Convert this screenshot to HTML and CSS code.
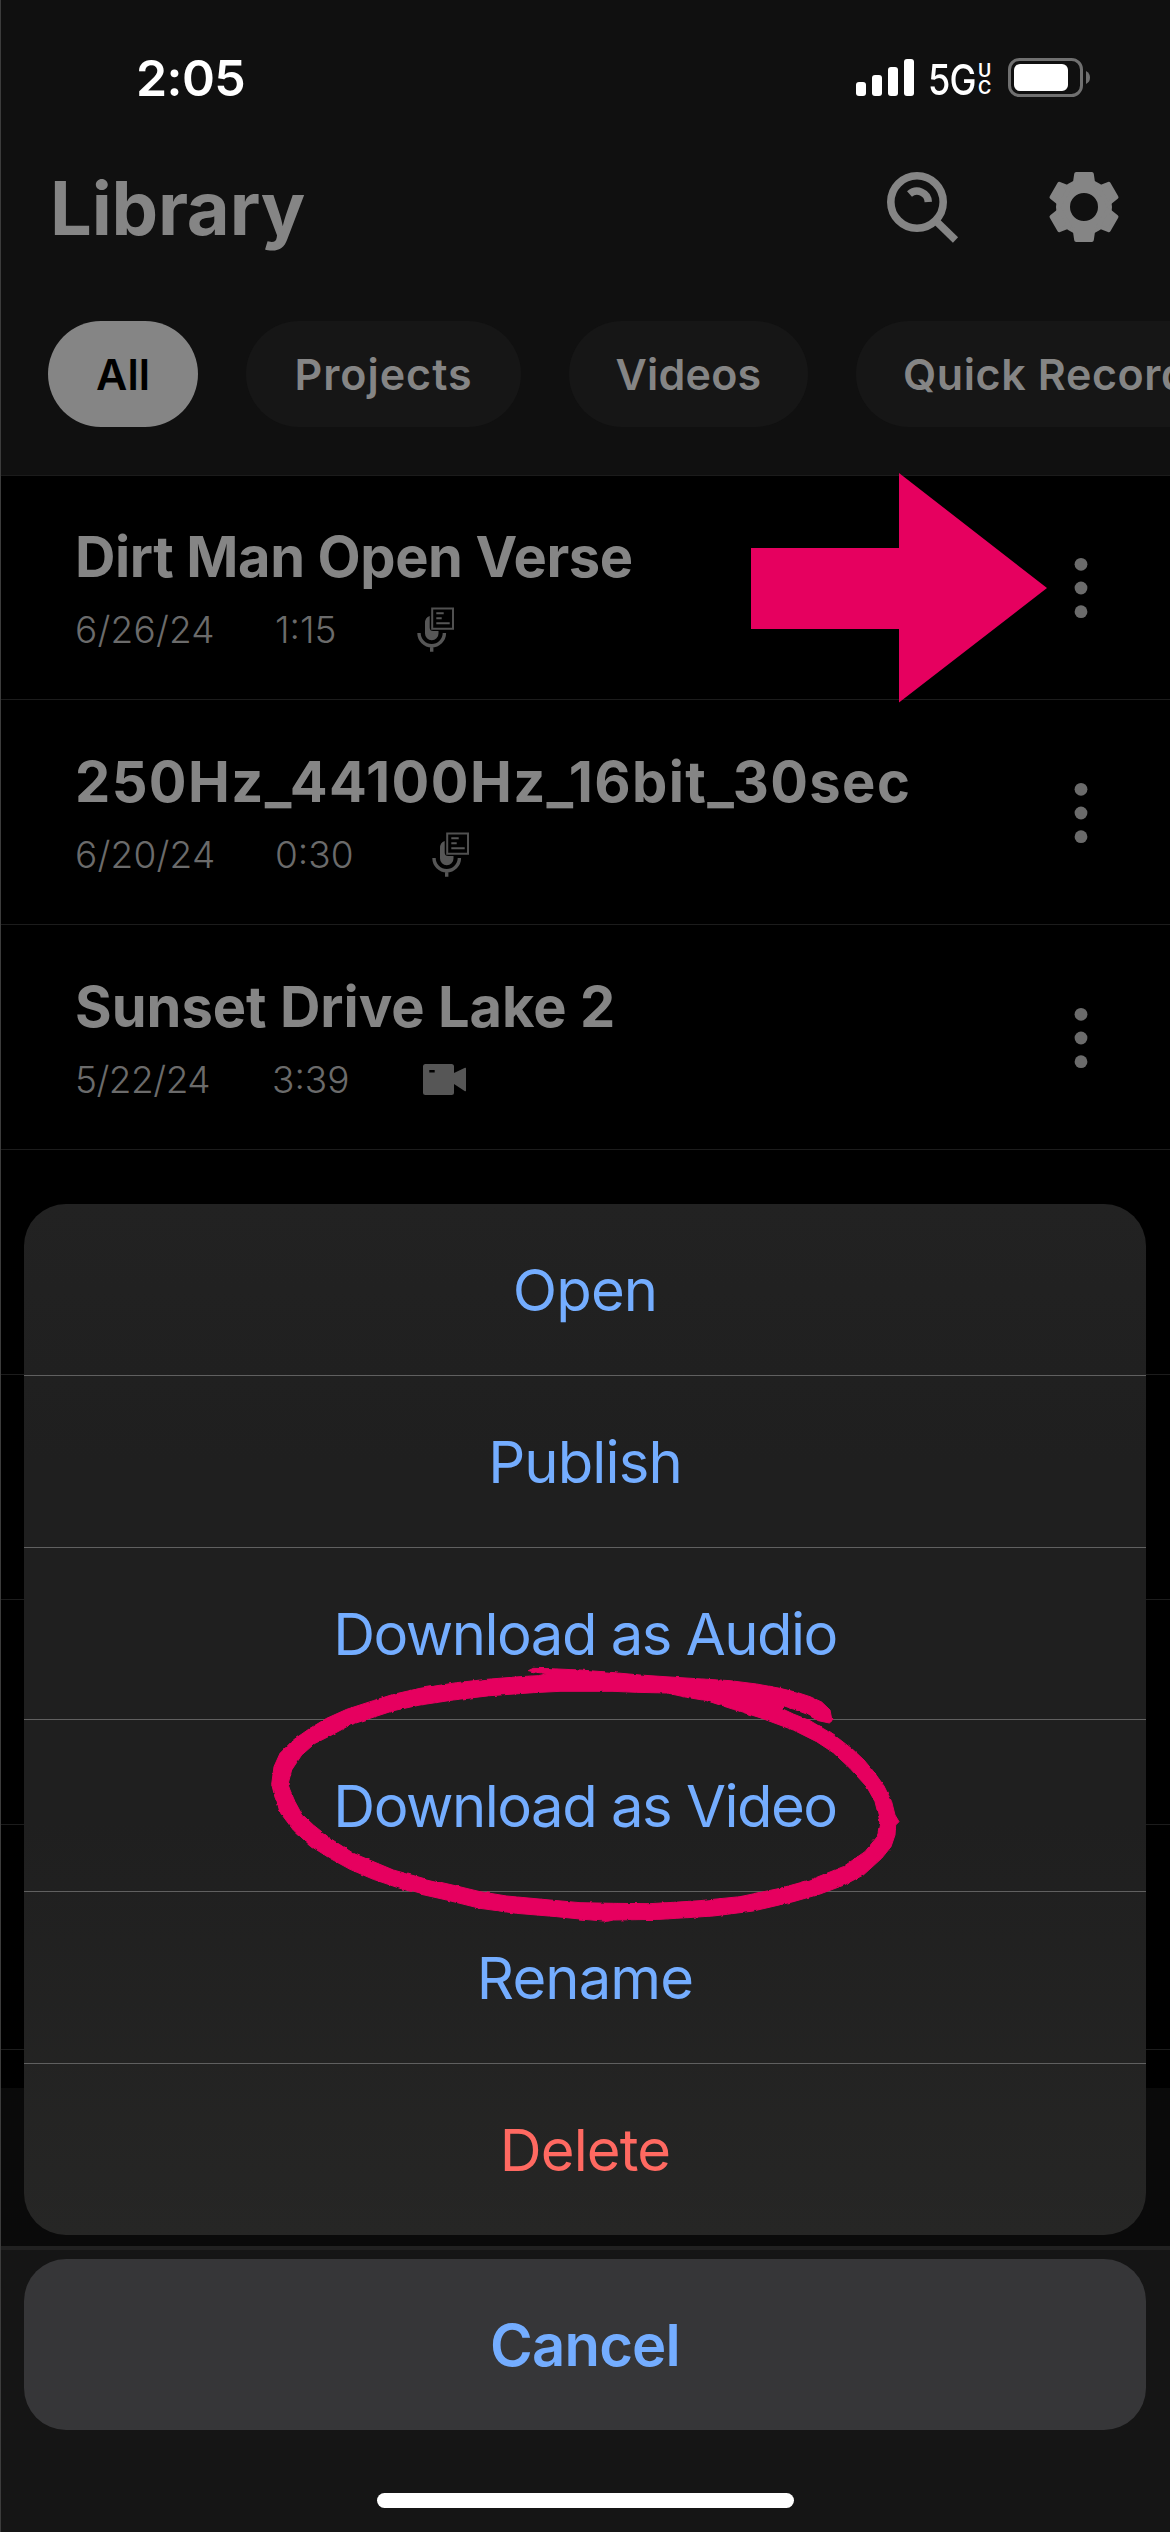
FILE: index.html
```html
<!DOCTYPE html>
<html lang="en">
<head>
<meta charset="utf-8">
<title>Library</title>
<link rel="stylesheet" href="styles.css">
</head>
<body>
<svg width="0" height="0" class="defs" aria-hidden="true">
  <symbol id="mic" viewBox="0 0 38 45">
    <path d="M8 26.5V16Q8 10.5 12.7 9V20.5Q12.7 24 16.2 24H21.5V26.5A6.75 6.75 0 0 1 8 26.5Z" fill="#565656"/>
    <path d="M2 26A12.7 12.7 0 0 0 27.4 26M14.7 38V44.7" fill="none" stroke="#565656" stroke-width="3.4"/>
    <path d="M15.2 1.5H36V21.7H15.2Z" fill="none" stroke="#505050" stroke-width="2"/>
    <path d="M19.3 6.3H26.7M19.3 11.3H24.7M19.3 16.3H32.7" stroke="#565656" stroke-width="2"/>
  </symbol>
  <symbol id="dots" viewBox="0 0 14 62">
    <g fill="#6b6b6b"><circle cx="7" cy="7.3" r="6.4"/><circle cx="7" cy="31" r="6.4"/><circle cx="7" cy="54.7" r="6.4"/></g>
  </symbol>
</svg>
<div class="screen">
  <header class="header">
    <div class="status">
      <span class="clock">2:05</span>
      <div class="indicators">
        <svg class="signal" width="58" height="38" viewBox="0 0 58 38" fill="#fff"><rect y="23" width="10" height="14" rx="3"/><rect x="16" y="16" width="10" height="21" rx="3"/><rect x="32" y="8" width="10" height="29" rx="3"/><rect x="48" width="10" height="37" rx="3"/></svg>
        <span class="network">5G</span>
        <span class="band"><span>U</span><span>C</span></span>
        <svg class="battery" width="83" height="40" viewBox="0 0 83 40"><rect x="1.5" y="1.5" width="72" height="36" rx="10" fill="none" stroke="#707070" stroke-width="3"/><rect x="6" y="6" width="54" height="27" rx="6" fill="#fff"/><path d="M78 13Q82 15 82 19.500Q82 24 78 26Z" fill="#707070"/></svg>
      </div>
    </div>
    <div class="titlebar">
      <h1>Library</h1>
      <div class="actions">
        <svg width="72" height="72" viewBox="0 0 72 72" fill="none" stroke="#858585"><circle cx="30" cy="31" r="26.200" stroke-width="7.600"/><path d="M22.500 23A11.300 11.300 0 0 1 41.300 31" stroke-width="7.400"/><path d="M50 51L68.500 69" stroke-width="7.400"/></svg>
        <svg width="72" height="72" viewBox="-36 -36 72 72"><circle r="21" fill="none" stroke="#858585" stroke-width="14"/><g id="teeth" fill="#858585" stroke="#858585" stroke-width="4" stroke-linejoin="round"><path id="tooth" d="M-7.800-33H7.800L9.400-22H-9.400Z"/><use href="#tooth" transform="rotate(60)"/><use href="#tooth" transform="rotate(120)"/><use href="#tooth" transform="rotate(180)"/><use href="#tooth" transform="rotate(240)"/><use href="#tooth" transform="rotate(300)"/></g></svg>
      </div>
    </div>
    <nav class="pills">
      <span class="pill all">All</span>
      <span class="pill projects">Projects</span>
      <span class="pill videos">Videos</span>
      <span class="pill quick">Quick Recordings</span>
    </nav>
  </header>
  <main class="list">
    <div class="row">
      <div class="info"><h2 class="t1">Dirt Man Open Verse</h2>
        <div class="meta"><span class="date">6/26/24</span><span class="time">1:15</span><svg class="mic m1"><use href="#mic"/></svg></div></div>
      <svg class="dots"><use href="#dots"/></svg>
    </div>
    <div class="row">
      <div class="info"><h2 class="t2">250Hz_44100Hz_16bit_30sec</h2>
        <div class="meta"><span class="date">6/20/24</span><span class="time">0:30</span><svg class="mic m2"><use href="#mic"/></svg></div></div>
      <svg class="dots"><use href="#dots"/></svg>
    </div>
    <div class="row">
      <div class="info"><h2 class="t3">Sunset Drive Lake 2</h2>
        <div class="meta"><span class="date d3">5/22/24</span><span class="time">3:39</span><svg class="cam" viewBox="0 0 43 31" fill="#565656"><path fill-rule="evenodd" d="M2.500 0H28.500Q31 0 31 2.500V9L42 3.800Q43 3.400 43 4.500V26.500Q43 27.600 42 27.200L31 20V28.500Q31 31 28.500 31H2.500Q0 31 0 28.500V2.500Q0 0 2.500 0ZM6.300 6V8.500H11.700V6Z"/></svg></div></div>
      <svg class="dots"><use href="#dots"/></svg>
    </div>
    <div class="row"></div><div class="row"></div><div class="row"></div><div class="row"></div>
  </main>
  <footer class="player"></footer>
  <div class="tabs"></div>

  <div class="overlay">
    <div class="sheet">
      <div class="item">Open</div>
      <div class="item">Publish</div>
      <div class="item long">Download as Audio</div>
      <div class="item long">Download as Video</div>
      <div class="item">Rename</div>
      <div class="item delete">Delete</div>
    </div>
    <div class="cancel">Cancel</div>
    <div class="home"></div>
  </div>

  <svg class="arrow" viewBox="0 0 296 230"><path d="M0 75H148V0L296 115L148 229.500V156H0Z" fill="#e6005f"/></svg>
  <svg class="scribble" viewBox="0 0 1980 870">
    <filter id="rough" color-interpolation-filters="sRGB" x="0" y="0" width="1" height="1"><feTurbulence type="fractalNoise" baseFrequency="0.05" numOctaves="2" seed="4"/><feDisplacementMap in="SourceGraphic" scale="8" xChannelSelector="R" yChannelSelector="G"/></filter>
    <g filter="url(#rough)"><rect width="1980" height="870" fill="none"/>
    <path fill="#e6005f" fill-rule="evenodd" stroke="#e6005f" stroke-width="3" d="M805 62L820 55L870 56L960 60L1040 66L1140 75L1230 81L1310 86L1410 92L1490 102L1560 115L1610 127L1650 140L1685 156L1710 180L1716 212L1708 219L1675 212L1640 192L1600 177L1570 167L1566 176L1600 192L1650 212L1705 245L1735 265L1780 300L1812 330L1845 370L1872 408L1895 455L1905 495L1917 515L1907 525L1905 555L1893 590L1865 625L1810 675L1750 706L1680 732L1600 755L1480 783L1360 798L1200 808L1060 810L1042 814L960 807L890 800L770 790L660 775L560 750L480 732L420 715L340 688L270 658L210 625L155 590L100 540L55 480L42 430L35 403L42 350L60 310L100 270L150 235L200 205L260 178L340 152L400 133L480 115L590 98L680 88L780 80L835 77L862 71L830 67Z
    M84 403L95 360L125 315L165 280L215 255L270 225L330 205L400 182L480 165L580 150L690 137L820 128L900 124L960 124L1060 124L1130 127L1220 129L1280 142L1340 152L1420 178L1500 203L1600 240L1670 275L1720 308L1770 355L1820 410L1845 455L1860 515L1852 560L1815 605L1750 650L1650 690L1560 715L1440 740L1320 752L1240 757L1170 761L1060 760L960 758L870 750L740 738L660 725L590 708L490 685L400 660L345 637L280 610L210 565L160 525L125 492L105 455L90 420Z"/></g>
  </svg>
</div>
</body>
</html>
```
FILE: styles.css
```css
* { box-sizing: border-box; }
body { margin: 0; background: #000; font-family: Inter, "Liberation Sans", sans-serif; }
h1, h2 { margin: 0; }
.defs { position: absolute; }
svg { display: block; flex: none; }

.screen { position: relative; width: 1170px; height: 2532px; overflow: hidden; background: #000; display: flex; flex-direction: column; }
.screen::before { content: ""; position: absolute; left: 0; top: 0; width: 1px; height: 100%; background: #3c3c3c; }

.header { flex: none; height: 476px; background: #101010; border-bottom: 1px solid #1b1b1b; }
.status { height: 156px; padding: 0 79px 0 136px; display: flex; align-items: center; justify-content: space-between; color: #fff; }
.clock { font-size: 50px; font-weight: 600; letter-spacing: -0.6px; }
.indicators { display: flex; align-items: center; }
.signal { margin-right: 14px; }
.network { font-size: 42px; font-weight: 500; letter-spacing: -1px; width: 50px; line-height: 46px; margin-top: 3px; transform: scaleX(0.86); transform-origin: left; }
.band { display: flex; flex-direction: column; width: 16px; margin-right: 14px; margin-top: 1px; font-size: 18px; font-weight: 600; line-height: 17px; }

.titlebar { height: 104px; padding: 0 50px 0 50px; display: flex; align-items: center; justify-content: space-between; }
h1 { font-size: 74px; font-weight: 700; line-height: 104px; letter-spacing: -0.2px; color: #858585; }
.actions { display: flex; gap: 89px; margin-bottom: 3px; }

.pills { display: flex; padding: 61px 0 0 48px; gap: 48px; overflow: hidden; }
.pill { flex: none; height: 106px; line-height: 107px; border-radius: 53px; background: #161616; color: #858585; font-size: 43px; font-weight: 600; text-align: center; white-space: nowrap; }
.all { width: 150px; background: #858585; color: #000; }
.projects { width: 275px; letter-spacing: 1px; }
.videos { width: 239px; letter-spacing: 0.2px; }
.quick { padding: 0 47px; letter-spacing: 0.6px; }

.row { height: 225px; border-bottom: 1px solid #1c1c1c; padding: 47px 82px 0 75px; display: flex; justify-content: space-between; }
.row:first-child { height: 224px; padding-top: 46px; }
h2 { font-size: 56px; font-weight: 700; line-height: 70px; color: #858585; white-space: nowrap; }
.t1 { letter-spacing: -0.4px; }
.t2 { letter-spacing: 1.4px; }
.meta { display: flex; align-items: center; height: 46px; margin-top: 14px; font-size: 37px; font-weight: 300; color: #6b6b6b; }
.date { width: 200px; letter-spacing: 0.2px; }
.d3 { width: 197px; letter-spacing: -0.5px; }
.time { width: 81px; }
.mic { width: 38px; height: 45px; }
.m1 { margin-left: 61px; }
.m2 { margin-left: 76px; }
.cam { width: 43px; height: 31px; margin-left: 70px; }
.dots { width: 14px; height: 62px; margin-top: 35px; }

.list { flex: none; height: 1612px; overflow: hidden; }
.player { flex: none; height: 162px; background: #0a0a0a; border-bottom: 4px solid #212121; }
.tabs { flex: 1; background: #151515; }

.overlay { position: absolute; left: 24px; right: 24px; top: 1204px; display: flex; flex-direction: column; }
.sheet { height: 1031px; border-radius: 42px; overflow: hidden; background: linear-gradient(180deg, #222 0, #1f1f1f 25%, #1f1f1f 60%, #262625 100%); }
.item { height: 172px; line-height: 172px; border-bottom: 1px solid #606060; text-align: center; font-size: 58px; letter-spacing: -0.9px; color: #74adff; }
.long { letter-spacing: -1.5px; }
.delete { color: #ff6961; border: 0; }
.cancel { height: 171px; line-height: 172px; margin-top: 24px; border-radius: 42px; background: #363638; text-align: center; font-size: 58px; font-weight: 600; letter-spacing: -0.8px; color: #74adff; }
.home { width: 417px; height: 15px; margin: 63px auto 0; border-radius: 8px; background: #fff; }

.arrow { position: absolute; left: 751px; top: 473px; width: 296px; height: 230px; }
.scribble { position: absolute; left: 260px; top: 1650px; width: 660px; height: 290px; }
```
